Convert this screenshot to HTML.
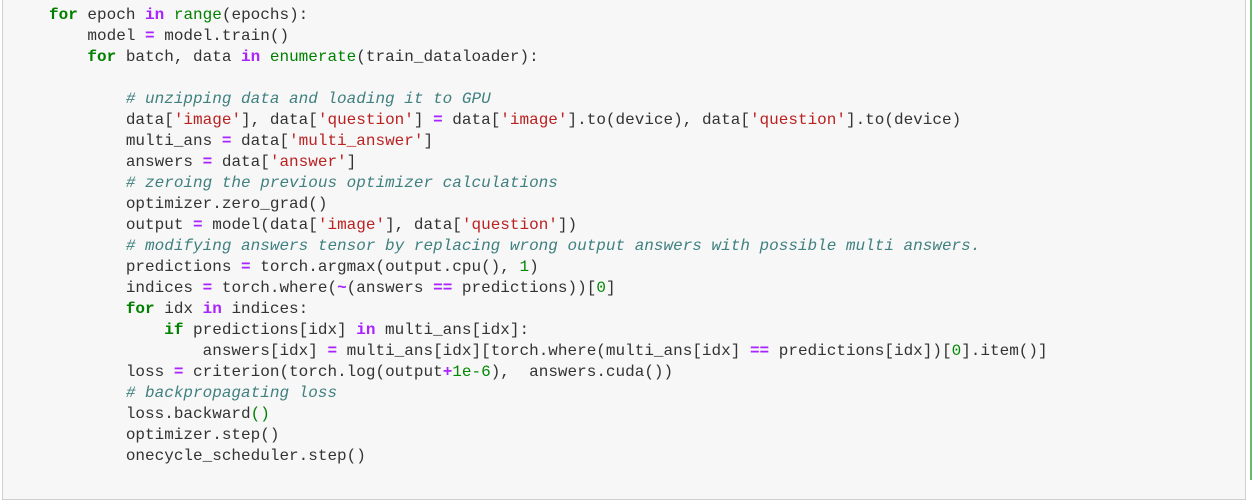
<!DOCTYPE html>
<html><head><style>
html,body{margin:0;padding:0;background:#fff;width:1252px;height:480px;overflow:hidden}
.cell{position:absolute;left:2px;top:-2px;width:1242px;height:500px;background:#f7f7f7;border:1px solid #cfcfcf}
.g{position:absolute;left:1250px;top:0;width:2px;height:480px;background:#66bb6a}
pre{position:absolute;left:49px;top:5px;margin:0;font-family:"Liberation Mono",monospace;font-size:16px;line-height:21px;color:#333}
.k{color:#008000;font-weight:bold}
.o{color:#aa22ff;font-weight:bold}
.b{color:#008000}
.s{color:#ba2121}
.c{color:#408080;font-style:italic}
.n{color:#008800}
</style></head><body>
<div class="cell"></div><div class="g"></div>
<pre><span class="k">for</span> epoch <span class="o">in</span> <span class="b">range</span>(epochs):
    model <span class="o">=</span> model.train()
    <span class="k">for</span> batch, data <span class="o">in</span> <span class="b">enumerate</span>(train_dataloader):

        <span class="c"># unzipping data and loading it to GPU</span>
        data[<span class="s">'image'</span>], data[<span class="s">'question'</span>] <span class="o">=</span> data[<span class="s">'image'</span>].to(device), data[<span class="s">'question'</span>].to(device)
        multi_ans <span class="o">=</span> data[<span class="s">'multi_answer'</span>]
        answers <span class="o">=</span> data[<span class="s">'answer'</span>]
        <span class="c"># zeroing the previous optimizer calculations</span>
        optimizer.zero_grad()
        output <span class="o">=</span> model(data[<span class="s">'image'</span>], data[<span class="s">'question'</span>])
        <span class="c"># modifying answers tensor by replacing wrong output answers with possible multi answers.</span>
        predictions <span class="o">=</span> torch.argmax(output.cpu(), <span class="n">1</span>)
        indices <span class="o">=</span> torch.where(<span class="o">~</span>(answers <span class="o">==</span> predictions))[<span class="n">0</span>]
        <span class="k">for</span> idx <span class="o">in</span> indices:
            <span class="k">if</span> predictions[idx] <span class="o">in</span> multi_ans[idx]:
                answers[idx] <span class="o">=</span> multi_ans[idx][torch.where(multi_ans[idx] <span class="o">==</span> predictions[idx])[<span class="n">0</span>].item()]
        loss <span class="o">=</span> criterion(torch.log(output<span class="o">+</span><span class="n">1e-6</span>),  answers.cuda())
        <span class="c"># backpropagating loss</span>
        loss.backward<span class="b">()</span>
        optimizer.step()
        onecycle_scheduler.step()
</pre>
</body></html>
